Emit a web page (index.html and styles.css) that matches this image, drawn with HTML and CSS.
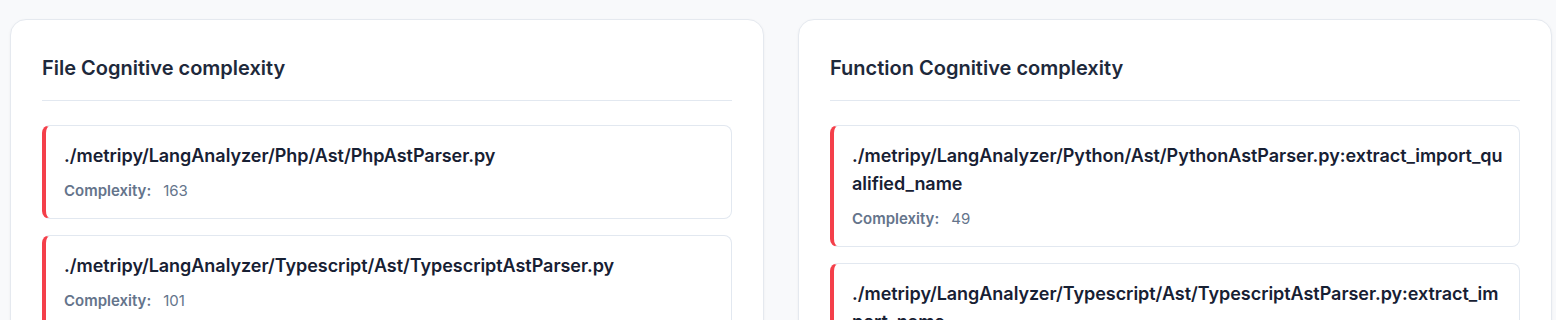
FILE: index.html
```html
<!DOCTYPE html>
<html lang="en">
  <head>
    <meta charset="UTF-8" />
    <meta name="viewport" content="width=device-width, initial-scale=1.0" />
    <title>Cognitive complexity</title>
    <link rel="stylesheet" href="styles.css">
  </head>
  <body>
    <div class="grid">
      <div class="card">
        <h2>File Cognitive complexity</h2>
        <div class="list">
          <div class="item">
            <div class="path">./metripy/LangAnalyzer/Php/Ast/PhpAstParser.py</div>
            <div class="meta"><span class="label">Complexity:</span><span class="value">163</span></div>
          </div>
          <div class="item">
            <div class="path">./metripy/LangAnalyzer/Typescript/Ast/TypescriptAstParser.py</div>
            <div class="meta"><span class="label">Complexity:</span><span class="value">101</span></div>
          </div>
        </div>
      </div>
      <div class="card">
        <h2>Function Cognitive complexity</h2>
        <div class="list">
          <div class="item">
            <div class="path">./metripy/LangAnalyzer/Python/Ast/PythonAstParser.py:extract_import_qualified_name</div>
            <div class="meta"><span class="label">Complexity:</span><span class="value">49</span></div>
          </div>
          <div class="item">
            <div class="path">./metripy/LangAnalyzer/Typescript/Ast/TypescriptAstParser.py:extract_import_name</div>
            <div class="meta"><span class="label">Complexity:</span><span class="value">41</span></div>
          </div>
        </div>
      </div>
    </div>
  </body>
</html>
```

FILE: styles.css
```css
body {
  margin: 0;
  background-color: #f8f9fb;
  font-family: Inter, "Noto Sans", sans-serif;
  color: #1e293b;
}
.grid {
  display: grid;
  grid-template-columns: 754px 754px;
  gap: 34px;
  padding: 19px 0 0 10px;
}
.card {
  background-color: #ffffff;
  border: 1px solid #e5e9ef;
  border-radius: 16px;
  box-shadow: 0 1px 3px rgba(15, 23, 42, 0.05);
  padding: 34px 31px 32px 31px;
}
h2 {
  margin: 0 0 24px 0;
  font-size: 20px;
  line-height: 28px;
  font-weight: 600;
  padding-bottom: 18px;
  border-bottom: 1px solid #e2e8f0;
}
.list {
  display: flex;
  flex-direction: column;
  gap: 16px;
}
.item {
  border: 1px solid #e2e8f0;
  border-left: 4px solid #f43f4a;
  border-radius: 8px;
  padding: 16px 12px 17px 18px;
}
.path {
  font-size: 18px;
  line-height: 28px;
  font-weight: 600;
  letter-spacing: -0.04px;
  color: #172033;
  word-break: break-all;
}
.meta {
  margin-top: 10px;
  font-size: 15px;
  line-height: 21px;
  color: #64748b;
}
.label {
  font-weight: 600;
  margin-right: 12px;
}
```
